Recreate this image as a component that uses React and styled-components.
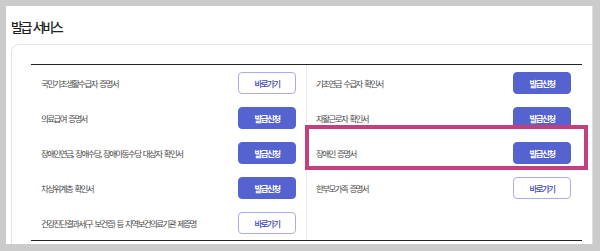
import React from "react";
import styled, { createGlobalStyle } from "styled-components";

const Global = createGlobalStyle`
  html, body { margin: 0; padding: 0; background: #cbcbcb; }
  body { font-family: "Noto Sans CJK KR", "Noto Sans", sans-serif; }
  #root { padding: 6px 0 0 6px; }
`;

const Panel = styled.section`
  width: 587px;
  height: 238px;
  background: #fff;
  border-right: 1px solid #dedede;
  box-sizing: border-box;
  overflow: hidden;
  padding: 11px 0 0 5px;
`;

const Title = styled.h2`
  margin: 0 0 7px 0;
  height: 20px;
  line-height: 20px;
  font-size: 13px;
  font-weight: 500;
  letter-spacing: -2.4px;
  word-spacing: 2px;
  color: #1f1f1f;
`;

const Card = styled.div`
  width: 640px;
  height: 260px;
  border: 1px solid #e4e4e4;
  border-radius: 8px;
  box-sizing: border-box;
  padding: 19px 0 0 19px;
`;

const Table = styled.div`
  position: relative;
  width: 551px;
  display: grid;
  grid-template-columns: 275px 276px;
  border-top: 1px solid #222;
  border-bottom: 1px solid #222;
`;

const Column = styled.div`
  display: flex;
  flex-direction: column;
  border-left: ${(p) => (p.$divided ? "1px solid #ececec" : "none")};
`;

const Row = styled.div`
  height: 35px;
  display: flex;
  align-items: center;
  justify-content: space-between;
  padding: ${(p) => (p.$right ? "0 11px 0 9px" : "0 10px 0 10px")};
`;

const Label = styled.span`
  font-size: 8.5px;
  letter-spacing: -1.6px;
  word-spacing: 2px;
  color: #4a4a4a;
  white-space: nowrap;
`;

const Button = styled.button`
  width: 58px;
  height: 22px;
  box-sizing: border-box;
  border-radius: 4px;
  font-family: inherit;
  font-size: 8.5px;
  font-weight: ${(p) => (p.$primary ? 700 : 500)};
  letter-spacing: -1.6px;
  padding: 0;
  cursor: pointer;
  background: ${(p) => (p.$primary ? "#5563d1" : "#fff")};
  color: ${(p) => (p.$primary ? "#fff" : "#3f46b8")};
  border: 1px solid ${(p) => (p.$primary ? "#5563d1" : "#a9ace8")};
`;

const Highlight = styled.div`
  position: absolute;
  left: 274px;
  top: 60px;
  width: 283px;
  height: 45px;
  box-sizing: border-box;
  border: 4px solid #c2407e;
  pointer-events: none;
`;

const left = [
  ["국민기초생활수급자 증명서", "go"],
  ["의료급여 증명서", "apply"],
  ["장애인연금, 장애수당, 장애아동수당 대상자 확인서", "apply"],
  ["차상위계층 확인서", "apply"],
  ["건강진단결과서(구 보건증) 등 지역보건의료기관 제증명", "go"],
];

const right = [
  ["기초연금 수급자 확인서", "apply"],
  ["자활근로자 확인서", "apply"],
  ["장애인 증명서", "apply"],
  ["한부모가족 증명서", "go"],
];

function Item({ label, kind, $right }) {
  const primary = kind === "apply";
  return (
    <Row $right={$right}>
      <Label>{label}</Label>
      <Button $primary={primary}>{primary ? "발급신청" : "바로가기"}</Button>
    </Row>
  );
}

export default function App() {
  return (
    <>
      <Global />
      <Panel>
        <Title>발급 서비스</Title>
        <Card>
          <Table>
            <Column>
              {left.map(([l, k]) => (
                <Item key={l} label={l} kind={k} />
              ))}
            </Column>
            <Column $divided>
              {right.map(([l, k]) => (
                <Item key={l} label={l} kind={k} $right />
              ))}
            </Column>
            <Highlight />
          </Table>
        </Card>
      </Panel>
    </>
  );
}
